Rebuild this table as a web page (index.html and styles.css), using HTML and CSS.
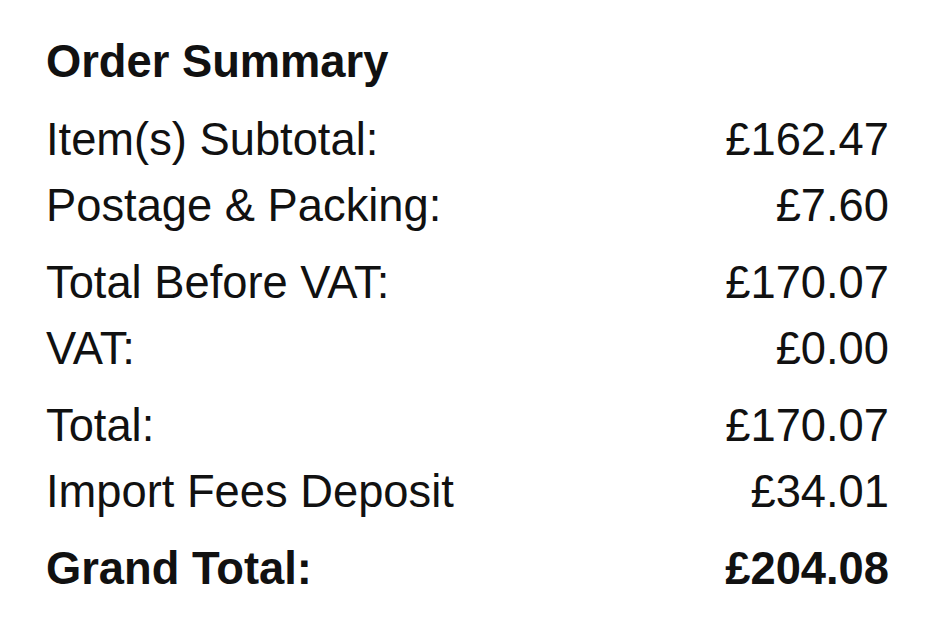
FILE: index.html
```html
<!DOCTYPE html>
<html>
<head>
<meta charset="utf-8">
<link rel="stylesheet" href="styles.css">
</head>
<body>
<div class="summary">
  <h2 class="title">Order Summary</h2>
  <div class="group">
    <div class="row"><span>Item(s) Subtotal:</span><span>£162.47</span></div>
    <div class="row"><span>Postage &amp; Packing:</span><span>£7.60</span></div>
  </div>
  <div class="group">
    <div class="row"><span>Total Before VAT:</span><span>£170.07</span></div>
    <div class="row"><span>VAT:</span><span>£0.00</span></div>
  </div>
  <div class="group">
    <div class="row"><span>Total:</span><span>£170.07</span></div>
    <div class="row"><span>Import Fees Deposit</span><span>£34.01</span></div>
  </div>
  <div class="group">
    <div class="row grand"><span>Grand Total:</span><span>£204.08</span></div>
  </div>
</div>
</body>
</html>
```
FILE: styles.css
```css
html, body {
  margin: 0;
  padding: 0;
  background: #fff;
}
body {
  font-family: "Liberation Sans", Arial, sans-serif;
  color: #111;
}
.summary {
  width: 943px;
  box-sizing: border-box;
  padding: 29px 54px 0 46px;
  display: flex;
  flex-direction: column;
  gap: 11px;
}
.title {
  margin: 0 0 1px 0;
  font-size: 45.3px;
  font-weight: bold;
  line-height: 66px;
}
.group {
  display: flex;
  flex-direction: column;
}
.row {
  display: flex;
  justify-content: space-between;
  font-size: 45.3px;
  line-height: 66px;
}
.row.grand {
  font-weight: bold;
}
```
